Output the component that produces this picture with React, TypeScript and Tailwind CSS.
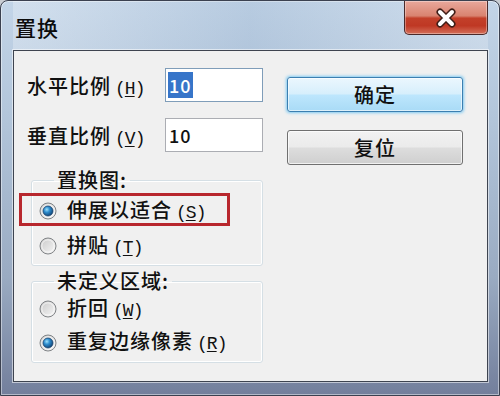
import React from "react";

const font = { fontFamily: '"Noto Sans CJK SC", "Noto Sans", sans-serif' };

function Radio({ checked }: { checked?: boolean }) {
  return (
    <svg width="18" height="18" viewBox="0 0 18 18" className="shrink-0">
      <defs>
        <linearGradient id="rbg" x1="0" y1="0" x2="1" y2="1">
          <stop offset="0" stopColor="#c8c8c8" />
          <stop offset="1" stopColor="#f8f8f8" />
        </linearGradient>
        <radialGradient id="rdot" cx="0.38" cy="0.35" r="0.7">
          <stop offset="0" stopColor="#9fe0fa" />
          <stop offset="0.4" stopColor="#2f8fd0" />
          <stop offset="1" stopColor="#103f70" />
        </radialGradient>
      </defs>
      <circle cx="9" cy="9" r="8" fill="url(#rbg)" stroke="#808386" strokeWidth="1" />
      <circle cx="9" cy="9" r="6.2" fill="none" stroke="#ffffff" strokeOpacity="0.7" strokeWidth="1" />
      {checked && <circle cx="9" cy="9" r="5" fill="url(#rdot)" stroke="#173f6a" strokeWidth="0.7" />}
    </svg>
  );
}

// access key in half-width parentheses, letter underlined
function Key({ k }: { k: string }) {
  return (
    <span className="ml-[4px] tracking-[-1px] text-[18px]" style={{ fontFamily: '"Liberation Mono", monospace' }}>
      (<span className="underline underline-offset-2">{k}</span>)
    </span>
  );
}

function Field({ value, selected }: { value: string; selected?: boolean }) {
  return (
    <div
      className={`w-[98px] h-[34px] bg-white border flex items-center pl-[2px] text-[18px] leading-[26px] ${
        selected ? "border-[#7f9db9]" : "border-[#abadb3]"
      }`}
    >
      {selected ? (
        <span className="bg-[#3775c9] text-white px-[1px]">{value}</span>
      ) : (
        <span className="px-[1px] text-[#111]">{value}</span>
      )}
    </div>
  );
}

export default function App() {
  return (
    <div className="w-[500px] h-[396px] bg-[#c9cdd3] text-[#111]" style={font}>
      <div className="w-full h-full flex flex-col rounded-t-[8px] border border-[#3b4150] bg-[linear-gradient(180deg,#c3d5e8_0%,#b2c5da_30%,#9aabc2_70%,#737f9c_100%)] pl-[12px] pr-[11px] pb-[13px] shadow-[inset_0_0_0_1px_rgba(255,255,255,0.45)]">
        {/* title bar */}
        <div className="h-[49px] flex justify-between items-start bg-[linear-gradient(90deg,rgba(255,255,255,0.25),rgba(120,150,185,0.15)_50%,rgba(255,255,255,0.2))]">
          <div className="pl-[2px] pt-[15px] text-[21px] leading-[22px] tracking-[1px] font-medium text-[#0c0c0c]">置换</div>
          <div className="w-[84px] h-[34px] rounded-b-[5px] border border-t-0 border-[#4b2a2a] bg-[linear-gradient(180deg,#e9a89c_0%,#d98370_45%,#c3402a_52%,#bf3824_75%,#d4705a_100%)] flex items-center justify-center shadow-[inset_0_0_0_1px_rgba(255,255,255,0.35)]">
            <svg width="24" height="20" viewBox="0 0 24 20">
              <path d="M6 4 L18 16 M18 4 L6 16" stroke="#3e1d17" strokeWidth="7" strokeLinecap="round" />
              <path d="M6 4 L18 16 M18 4 L6 16" stroke="#ffffff" strokeWidth="4" strokeLinecap="round" />
            </svg>
          </div>
        </div>

        {/* client area */}
        <div className="flex-1 bg-[#f0f0f0] border border-[#3e4450] shadow-[0_0_0_1px_rgba(255,255,255,0.55)] flex pt-[17px] pl-[13px] text-[20px] tracking-[1px] font-medium">
          <div className="w-[236px] flex flex-col">
            <div className="h-[34px] flex items-center justify-between">
              <span className="pt-[5px] leading-[24px] whitespace-nowrap">
                水平比例<Key k="H" />
              </span>
              <Field value="10" selected />
            </div>
            <div className="h-[34px] mt-[16px] flex items-center justify-between">
              <span className="pt-[5px] leading-[24px] whitespace-nowrap">
                垂直比例<Key k="V" />
              </span>
              <Field value="10" />
            </div>

            <fieldset className="mt-[17px] ml-[4px] w-[232px] border border-[#d5dfe5] rounded-[3px] pb-[2px] shadow-[inset_0_0_0_1px_#ffffff]">
              <legend className="ml-[22px] px-[3px] leading-[22px]">置换图:</legend>
              <div className="mt-[2px] ml-[-13px] w-[211px] h-[33px] border-[3px] border-[#b8272d] flex items-center pt-[3px] pl-[17px] gap-[10px]">
                <Radio checked />
                <span className="leading-[22px] whitespace-nowrap">
                  伸展以适合<Key k="S" />
                </span>
              </div>
              <div className="mt-[3px] h-[34px] flex items-center pl-[7px] gap-[10px]">
                <Radio />
                <span className="leading-[22px] whitespace-nowrap">
                  拼贴<Key k="T" />
                </span>
              </div>
            </fieldset>

            <fieldset className="mt-[4px] ml-[4px] w-[232px] border border-[#d5dfe5] rounded-[3px] pb-[3px] shadow-[inset_0_0_0_1px_#ffffff]">
              <legend className="ml-[22px] px-[3px] leading-[22px]">未定义区域:</legend>
              <div className="h-[34px] flex items-center pl-[7px] gap-[10px]">
                <Radio />
                <span className="leading-[22px] whitespace-nowrap">
                  折回<Key k="W" />
                </span>
              </div>
              <div className="h-[33px] flex items-center pl-[7px] gap-[10px]">
                <Radio checked />
                <span className="leading-[22px] whitespace-nowrap">
                  重复边缘像素<Key k="R" />
                </span>
              </div>
            </fieldset>
          </div>

          <div className="ml-[24px] w-[176px] pt-[9px] flex flex-col">
            <button className="h-[35px] rounded-[3px] border border-[#3c7fb1] bg-[linear-gradient(180deg,#ebf7fe_0%,#d7effc_48%,#bde6fd_52%,#a9dbf6_100%)] shadow-[0_0_3px_1px_#7fcaf2,inset_0_0_0_1px_rgba(255,255,255,0.6)] leading-[22px]">
              确定
            </button>
            <button className="mt-[18px] h-[35px] rounded-[3px] border border-[#707070] bg-[linear-gradient(180deg,#f2f2f2_0%,#ebebeb_48%,#dddddd_52%,#cfcfcf_100%)] shadow-[inset_0_0_0_1px_rgba(255,255,255,0.7)] leading-[22px]">
              复位
            </button>
          </div>
        </div>
      </div>
    </div>
  );
}
